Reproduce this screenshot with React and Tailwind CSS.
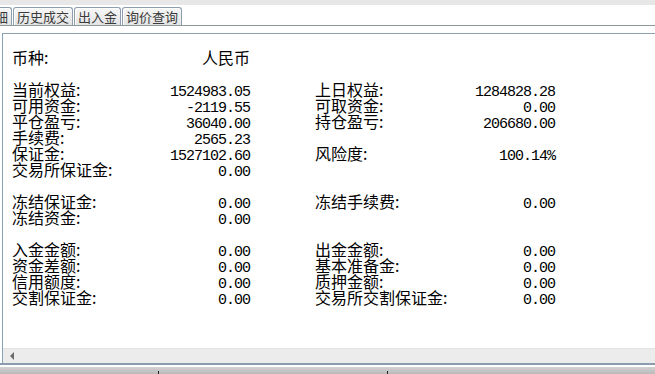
const cjk = "font-['Noto_Sans_CJK_SC',sans-serif]";
const mono = "font-['Liberation_Mono','Noto_Sans_CJK_SC',monospace] text-[15px] tracking-[-1px]";

const rows = [
  [['币种:', '人民币', true], null],
  null,
  [['当前权益:', '1524983.05'], ['上日权益:', '1284828.28']],
  [['可用资金:', '-2119.55'], ['可取资金:', '0.00']],
  [['平仓盈亏:', '36040.00'], ['持仓盈亏:', '206680.00']],
  [['手续费:', '2565.23'], null],
  [['保证金:', '1527102.60'], ['风险度:', '100.14%']],
  [['交易所保证金:', '0.00'], null],
  null,
  [['冻结保证金:', '0.00'], ['冻结手续费:', '0.00']],
  [['冻结资金:', '0.00'], null],
  null,
  [['入金金额:', '0.00'], ['出金金额:', '0.00']],
  [['资金差额:', '0.00'], ['基本准备金:', '0.00']],
  [['信用额度:', '0.00'], ['质押金额:', '0.00']],
  [['交割保证金:', '0.00'], ['交易所交割保证金:', '0.00']],
];

function Cell({ item, width }) {
  return (
    <div className={`flex justify-between items-baseline ${width}`}>
      {item && (
        <>
          <span className={`${cjk} text-[16px]`}>{item[0]}</span>
          <span className={item[2] ? `${cjk} text-[16px]` : mono}>{item[1]}</span>
        </>
      )}
    </div>
  );
}

function Tab({ label, className = '' }) {
  return (
    <div
      className={`h-[18px] shrink-0 flex items-center px-[3px] border border-b-0 border-[#8e9eae] rounded-t-[3px] bg-gradient-to-b from-[#f7f7f7] to-[#e4e4e4] shadow-[inset_1px_1px_0_#ffffff] text-[13px] leading-none text-[#3a3a3a] ${cjk} ${className}`}
    >
      {label}
    </div>
  );
}

export default function App() {
  return (
    <div className="w-[655px] h-[374px] overflow-hidden bg-white flex flex-col">
      <div className="h-[5px] bg-[#e7e7e7] shrink-0" />
      <div className="h-[21px] shrink-0 flex items-end gap-[1px] border-b border-[#8c9a9a] overflow-hidden">
        <Tab label="细" className="ml-[-9px]" />
        <Tab label="历史成交" />
        <Tab label="出入金" />
        <Tab label="询价查询" />
      </div>
      <div className="h-[7px] shrink-0" />
      <div className="h-[330px] shrink-0 ml-[2px] border-l border-t border-[#8aa2b6] flex flex-col">
        <div className="flex-1 pt-[15px] pl-[9px] leading-[16px] text-black">
          {rows.map((r, i) =>
            r ? (
              <div key={i} className="flex h-[16px]">
                <Cell item={r[0]} width="w-[238px]" />
                <div className="w-[65px]" />
                <Cell item={r[1]} width="w-[240px]" />
              </div>
            ) : (
              <div key={i} className="h-[16px]" />
            )
          )}
        </div>
        <div className="h-[15px] shrink-0 bg-[#ececec] border-t border-[#e2e2e2] flex items-center pl-[7px]">
          <svg width="5" height="8" viewBox="0 0 5 8">
            <path d="M4 0 L0 4 L4 8 Z" fill="#6a6a6a" />
          </svg>
        </div>
      </div>
      <div className="h-[2px] shrink-0 bg-[#8b9cad]" />
      <div className="h-[2px] shrink-0 bg-white" />
      <div className="flex-1 bg-gradient-to-b from-[#d2d2d2] to-[#b9b9b9] flex items-end">
        <div className="ml-[158px] w-[1px] h-[3px] bg-[#222]" />
        <div className="ml-[228px] w-[1px] h-[3px] bg-[#222]" />
      </div>
    </div>
  );
}
